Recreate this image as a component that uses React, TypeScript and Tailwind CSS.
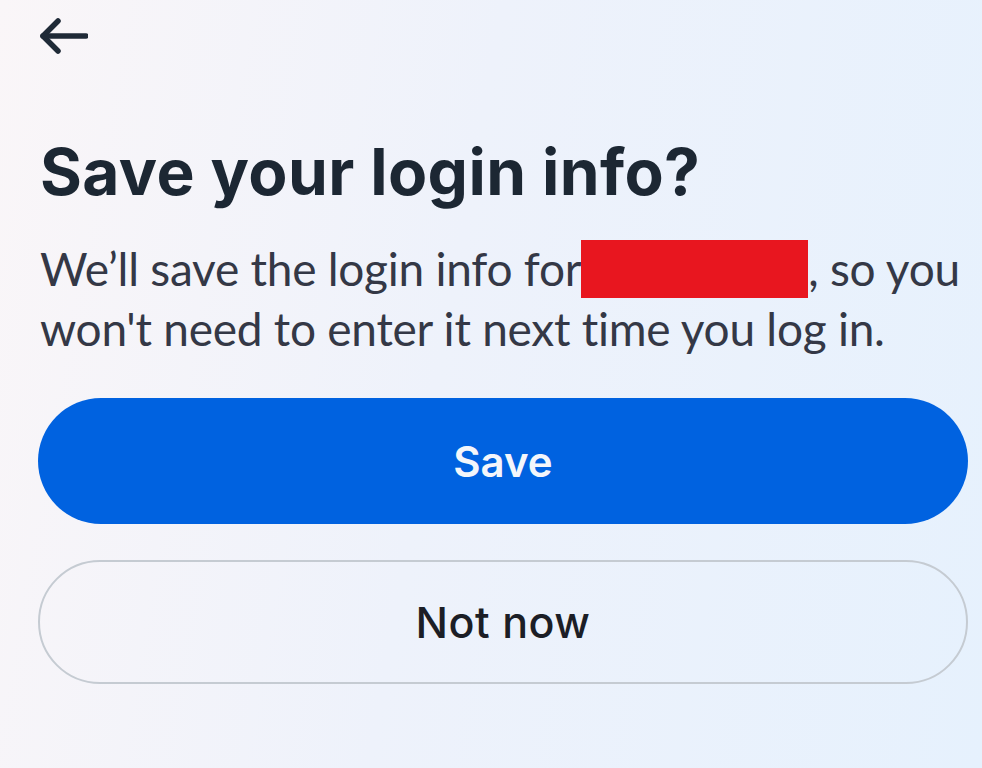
function ArrowLeftIcon() {
    return (
        <svg width="48" height="36" viewBox="0 0 48 36" fill="none" stroke="currentColor" strokeWidth="5.5"
            strokeLinecap="round" strokeLinejoin="round">
            <path d="M18 3 3 18l15 15"/>
            <path d="M3 18h43"/>
        </svg>
    );
}

export default function App() {
    return (
        <div className="min-h-screen w-full bg-[linear-gradient(100deg,#faf6f8_0%,#eef2fb_45%,#e6f1fd_100%)] font-['Lato',sans-serif] pt-[18px] pl-[38px] pr-[14px]">
            <button className="ml-[2px] block text-[#1f2a37]">
                <ArrowLeftIcon/>
            </button>

            <h1 className="mt-[86px] ml-[2px] font-['Inter',sans-serif] text-[64px] leading-[64px] font-bold text-[#1c2733] tracking-[0.4px]">
                Save your login info?
            </h1>

            <p className="mt-[35px] ml-[2px] text-[46px] leading-[60px] text-[#343846] tracking-[-0.25px]">
                <span className="whitespace-nowrap">
                    We’ll save the login info for
                    <span className="inline-block align-top mt-[1px] w-[227px] h-[58px] bg-[#e8161f]"/>
                    , so you
                </span>
                <br/>
                <span className="whitespace-nowrap">won't need to enter it next time you log in.</span>
            </p>

            <div className="mt-[39px] flex flex-col gap-[36px] font-['Inter',sans-serif]">
                <button className="h-[126px] w-full rounded-full bg-[#0062e0] text-[42px] font-semibold text-[#f3f6fb]">
                    Save
                </button>
                <button className="h-[124px] w-full rounded-full border-2 border-[#c5cbd2] text-[43px] font-medium text-[#1c1e26] tracking-[0.5px]">
                    Not now
                </button>
            </div>
        </div>
    );
}
